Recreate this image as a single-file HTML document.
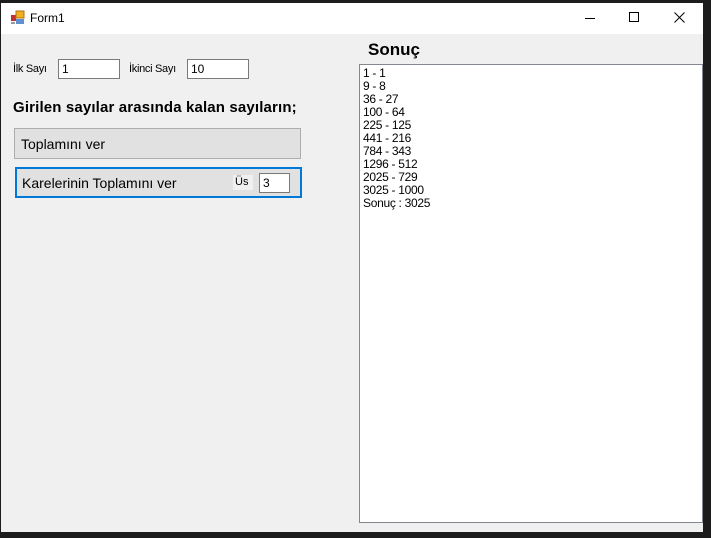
<!DOCTYPE html>
<html><head><meta charset="utf-8"><style>
*{margin:0;padding:0;box-sizing:border-box}
body{width:711px;height:538px;background:#1c1c1c;position:relative;overflow:hidden;font-family:"Liberation Sans",sans-serif;color:#000}
.win{position:absolute;left:1px;top:3px;width:702px;height:529px;background:#f0f0f0}
.title{position:absolute;left:0;top:0;width:702px;height:31px;background:#fff}
.abs{position:absolute}
.inp{position:absolute;background:#fff;border:1px solid #7a7a7a;font-size:12px;padding:2px 3px;height:20px}
.lbl{position:absolute;font-size:11px;letter-spacing:-0.3px}
</style></head><body>
<div class="win">
 <div class="title">
  <svg class="abs" style="left:9px;top:7px" width="16" height="16" viewBox="0 0 16 16">
   <rect x="1" y="5" width="5" height="6" fill="#c03030"/><rect x="6" y="1" width="8" height="7" fill="#f0b020" stroke="#b07010" stroke-width="1"/><rect x="6" y="9" width="8" height="5" fill="#6090d0"/><rect x="1" y="12" width="4" height="2" fill="#999"/>
  </svg>
  <div class="abs" style="left:29px;top:8px;font-size:12px">Form1</div>
  <div class="abs" style="left:584px;top:15px;width:10px;height:1px;background:#000"></div>
  <div class="abs" style="left:628px;top:9px;width:10px;height:10px;border:1px solid #000"></div>
  <svg class="abs" style="left:673px;top:9px" width="11" height="11"><path d="M0.5 0.5L10.5 10.5M10.5 0.5L0.5 10.5" stroke="#000" stroke-width="1"/></svg>
 </div>
 <div class="lbl" style="left:12px;top:60px">İlk Sayı</div>
 <div class="inp" style="left:57px;top:56px;width:62px">1</div>
 <div class="lbl" style="left:128px;top:60px">İkinci Sayı</div>
 <div class="inp" style="left:186px;top:56px;width:62px">10</div>
 <div class="abs" style="left:12px;top:96px;font-size:15px;font-weight:bold;letter-spacing:0.15px">Girilen sayılar arasında kalan sayıların;</div>
 <div class="abs" style="left:13px;top:125px;width:287px;height:31px;background:#e1e1e1;border:1px solid #adadad;font-size:14px;padding:7px 6px">Toplamını ver</div>
 <div class="abs" style="left:14px;top:164px;width:287px;height:31px;background:#e1e1e1;border:2px solid #0078d7;font-size:14px;padding:6px 5px">Karelerinin Toplamını ver</div>
 <div class="abs" style="left:232px;top:172px;width:20px;height:15px;background:#f0f0f0;font-size:11px;padding:1px 0 0 2px">Üs</div>
 <div class="inp" style="left:258px;top:170px;width:31px">3</div>
 <div class="abs" style="left:367px;top:37px;font-size:17px;font-weight:bold">Sonuç</div>
 <div class="abs" style="left:358px;top:61px;width:344px;height:459px;background:#fff;border:1px solid #828790;font-size:12px;line-height:13px;padding:2px 3px;letter-spacing:-0.3px">1 - 1<br>9 - 8<br>36 - 27<br>100 - 64<br>225 - 125<br>441 - 216<br>784 - 343<br>1296 - 512<br>2025 - 729<br>3025 - 1000<br>Sonuç : 3025</div>
</div>
</body></html>
